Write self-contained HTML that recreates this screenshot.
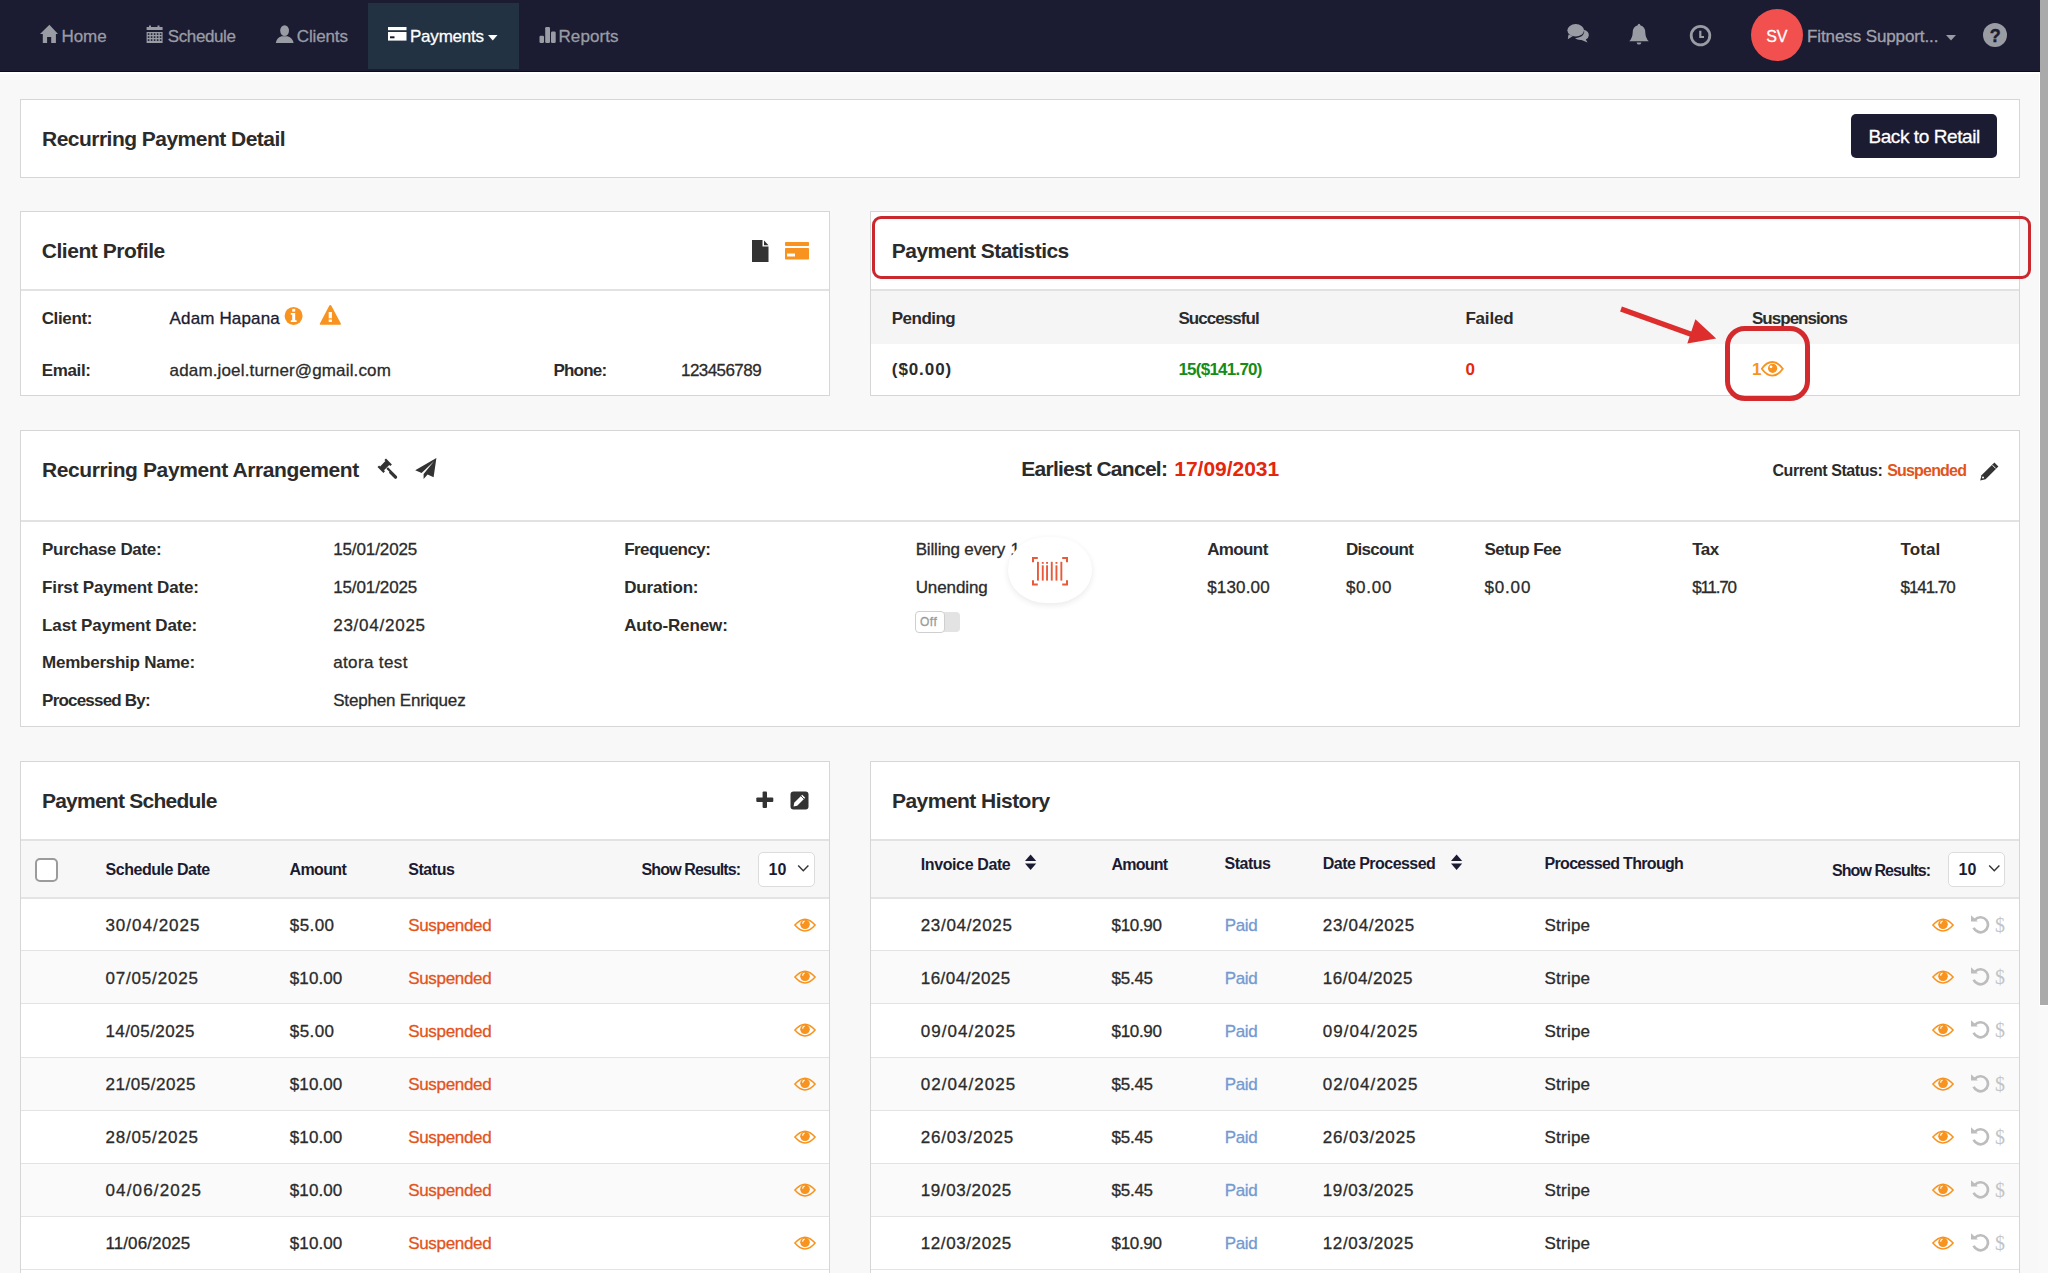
<!DOCTYPE html><html><head><meta charset="utf-8"><style>
html,body{margin:0;padding:0;}
body{width:2048px;height:1273px;overflow:hidden;background:#f8f8f8;position:relative;font-family:"Liberation Sans",sans-serif;}
.t{position:absolute;white-space:nowrap;}
.r{-webkit-text-stroke:0.3px currentColor;}
svg{display:block}
</style></head><body>
<div style="position:absolute;left:2039px;top:0px;width:9px;height:1273px;background:#f9f9f9;"></div>
<div style="position:absolute;left:2039px;top:0px;width:1px;height:1006px;background:#ffffff;"></div>
<div style="position:absolute;left:2040px;top:1005px;width:8px;height:1px;background:#ffffff;"></div>
<div style="position:absolute;left:2040px;top:0px;width:8px;height:1005px;background:#aaaaaa;"></div>
<div style="position:absolute;left:0px;top:0px;width:2040px;height:72px;background:#1b1b32;"></div>
<div style="position:absolute;left:0px;top:71px;width:2040px;height:1px;background:#0c0b1c;"></div>
<div style="position:absolute;left:0px;top:72px;width:2039px;height:2px;background:#ffffff;"></div>
<div style="position:absolute;left:368px;top:3px;width:151px;height:66px;background:#233242;"></div>
<svg style="position:absolute;left:40px;top:24px" width="18" height="19" viewBox="0 0 18 19"><path d="M9.4 0.8 L18 10 L15.9 10 L15.9 18.9 L11.2 18.9 L11.2 13.1 L7.1 13.1 L7.1 18.9 L2.8 18.9 L2.8 10 L0 10 Z" fill="#9a9ca4"/></svg>
<div class="t r" style="left:61.40px;top:27.6px;font-size:17px;line-height:17px;color:#9a9ca4;">Home</div>
<svg style="position:absolute;left:146px;top:25px" width="17" height="18" viewBox="0 0 17 18"><rect x="0.6" y="2" width="16" height="3" fill="#9a9ca4"/><rect x="3" y="0.5" width="2" height="3" fill="#9a9ca4"/><rect x="11.5" y="0.5" width="2" height="3" fill="#9a9ca4"/><rect x="0.6" y="7" width="16" height="11" fill="#9a9ca4"/><rect x="1.8" y="8.3" width="1.6" height="1.6" fill="#1b1b32"/><rect x="4.8" y="8.3" width="1.6" height="1.6" fill="#1b1b32"/><rect x="7.8" y="8.3" width="1.6" height="1.6" fill="#1b1b32"/><rect x="10.8" y="8.3" width="1.6" height="1.6" fill="#1b1b32"/><rect x="13.8" y="8.3" width="1.6" height="1.6" fill="#1b1b32"/><rect x="1.8" y="11.3" width="1.6" height="1.6" fill="#1b1b32"/><rect x="4.8" y="11.3" width="1.6" height="1.6" fill="#1b1b32"/><rect x="7.8" y="11.3" width="1.6" height="1.6" fill="#1b1b32"/><rect x="10.8" y="11.3" width="1.6" height="1.6" fill="#1b1b32"/><rect x="13.8" y="11.3" width="1.6" height="1.6" fill="#1b1b32"/><rect x="1.8" y="14.3" width="1.6" height="1.6" fill="#1b1b32"/><rect x="4.8" y="14.3" width="1.6" height="1.6" fill="#1b1b32"/><rect x="7.8" y="14.3" width="1.6" height="1.6" fill="#1b1b32"/><rect x="10.8" y="14.3" width="1.6" height="1.6" fill="#1b1b32"/><rect x="13.8" y="14.3" width="1.6" height="1.6" fill="#1b1b32"/></svg>
<div class="t r" style="left:167.80px;top:27.6px;font-size:17px;line-height:17px;color:#9a9ca4;letter-spacing:-0.400px;">Schedule</div>
<svg style="position:absolute;left:275px;top:25px" width="19" height="19" viewBox="0 0 19 19"><ellipse cx="9.6" cy="5.6" rx="4.4" ry="5.4" fill="#9a9ca4"/><path d="M0.8 18 Q1.5 13 6.5 11.2 L12.5 11.2 Q17.8 13 18.6 18 Z" fill="#9a9ca4"/></svg>
<div class="t r" style="left:296.80px;top:27.6px;font-size:17px;line-height:17px;color:#9a9ca4;letter-spacing:-0.133px;">Clients</div>
<svg style="position:absolute;left:388px;top:27px" width="19" height="14" viewBox="0 0 19 14"><rect x="0" y="0" width="18.5" height="3.2" fill="#fff"/><rect x="0" y="5" width="18.5" height="8.6" fill="#fff"/><rect x="2" y="9.3" width="4.5" height="2" fill="#1b1b32"/></svg>
<div class="t r" style="left:410.00px;top:27.6px;font-size:17px;line-height:17px;color:#ffffff;letter-spacing:-0.214px;">Payments</div>
<svg style="position:absolute;left:488px;top:35px" width="10" height="6" viewBox="0 0 10 6"><path d="M0 0 L9.5 0 L4.75 5.5 Z" fill="#fff"/></svg>
<svg style="position:absolute;left:539px;top:26px" width="17" height="17" viewBox="0 0 17 17"><rect x="0.5" y="9.8" width="4.5" height="7.2" rx="1.2" fill="#9a9ca4"/><rect x="6.2" y="1" width="4.8" height="16" rx="1.2" fill="#9a9ca4"/><rect x="12" y="5.6" width="4.7" height="11.4" rx="1.2" fill="#9a9ca4"/></svg>
<div class="t r" style="left:558.50px;top:27.6px;font-size:17px;line-height:17px;color:#9a9ca4;letter-spacing:0.083px;">Reports</div>
<svg style="position:absolute;left:1566px;top:24px" width="24" height="19" viewBox="0 0 24 19"><ellipse cx="9.7" cy="6.3" rx="8.3" ry="6.2" fill="#9a9ca4"/><path d="M2.5 10.5 L1.8 15.2 L7 12 Z" fill="#9a9ca4"/><path d="M18 5.8 Q23.2 7.5 22.8 11.6 Q22.5 14.6 19.8 15.6 L21.5 18.5 L15.5 16 Q11.2 16.2 9 14.2 Q16.8 13.6 18.2 8.5 Z" fill="#9a9ca4"/></svg>
<svg style="position:absolute;left:1628px;top:23px" width="22" height="23" viewBox="0 0 22 23"><path d="M11 0.8 Q12.2 0.8 12.3 2.3 Q17.2 3.5 17.3 9.5 Q17.4 15 20.8 18.3 L1.2 18.3 Q4.6 15 4.7 9.5 Q4.8 3.5 9.7 2.3 Q9.8 0.8 11 0.8 Z" fill="#9a9ca4"/><path d="M8.6 19.4 Q9 21.6 11 21.6 Q13 21.6 13.4 19.4 Z" fill="#9a9ca4"/></svg>
<svg style="position:absolute;left:1689px;top:24px" width="23" height="23" viewBox="0 0 23 23"><circle cx="11.5" cy="11.6" r="9.3" fill="none" stroke="#9a9ca4" stroke-width="2.8"/><path d="M11.3 6.8 L11.3 13 L15 13" fill="none" stroke="#9a9ca4" stroke-width="2.2"/></svg>
<div style="position:absolute;left:1751px;top:9px;width:52px;height:52px;background:#f24f4f;border-radius:50%;"></div>
<div class="t r" style="left:1766.20px;top:28.6px;font-size:16px;line-height:16px;color:#ffffff;">SV</div>
<div class="t r" style="left:1807.00px;top:27.6px;font-size:17px;line-height:17px;color:#a0a2ab;letter-spacing:-0.106px;">Fitness Support...</div>
<svg style="position:absolute;left:1946px;top:35px" width="11" height="6" viewBox="0 0 11 6"><path d="M0 0 L10 0 L5 5.5 Z" fill="#9a9ca4"/></svg>
<svg style="position:absolute;left:1983px;top:23px" width="24" height="24" viewBox="0 0 24 24"><circle cx="12" cy="12" r="12" fill="#9a9ca4"/></svg>
<div class="t" style="left:1989.80px;top:26.5px;font-size:18px;line-height:18px;color:#1b1b32;font-weight:bold;-webkit-text-stroke:0.4px #1b1b32;">?</div>
<div style="position:absolute;left:20px;top:99px;width:2000px;height:79px;box-sizing:border-box;background:#fff;border:1px solid #d6d6d6;"></div>
<div class="t" style="left:42.00px;top:127.9px;font-size:21px;line-height:21px;color:#2b2b2b;font-weight:bold;letter-spacing:-0.522px;">Recurring Payment Detail</div>
<div style="position:absolute;left:1851px;top:114px;width:146px;height:44px;background:#1b1b32;border-radius:5px;"></div>
<div class="t r" style="left:1868.40px;top:126.69999999999999px;font-size:19px;line-height:19px;color:#ffffff;letter-spacing:-0.415px;">Back to Retail</div>
<div style="position:absolute;left:20px;top:211px;width:810px;height:185px;box-sizing:border-box;background:#fff;border:1px solid #d6d6d6;"></div>
<div style="position:absolute;left:21px;top:289px;width:808px;height:2px;background:#e2e2e2;"></div>
<div class="t" style="left:41.70px;top:240.39999999999998px;font-size:21px;line-height:21px;color:#2b2b2b;font-weight:bold;letter-spacing:-0.454px;">Client Profile</div>
<svg style="position:absolute;left:752px;top:240px" width="17" height="22" viewBox="0 0 17 22"><path d="M0 0 L10.5 0 L10.5 6.5 L16.5 6.5 L16.5 22 L0 22 Z" fill="#333"/><path d="M12 0.5 L16.5 5.2 L12 5.2 Z" fill="#333"/></svg>
<svg style="position:absolute;left:785px;top:242px" width="24" height="18" viewBox="0 0 24 18"><rect x="0" y="0" width="24" height="4" rx="0.8" fill="#f7931e"/><rect x="0" y="6" width="24" height="11.6" rx="0.8" fill="#f7931e"/><rect x="2" y="11.5" width="8" height="3" fill="#fff"/></svg>
<div class="t" style="left:41.70px;top:309.9px;font-size:17px;line-height:17px;color:#2b2b2b;font-weight:bold;letter-spacing:-0.367px;">Client:</div>
<div class="t r" style="left:169.60px;top:309.9px;font-size:17px;line-height:17px;color:#1b1b32;letter-spacing:0.140px;">Adam Hapana</div>
<svg style="position:absolute;left:284px;top:306px" width="20" height="20" viewBox="0 0 20 20"><circle cx="9.6" cy="9.9" r="9" fill="#f7931e"/><rect x="8.2" y="2.9" width="3" height="2.7" fill="#fff"/><path d="M6.8 7 L11.2 7 L11.2 14.2 L12.6 14.2 L12.6 16 L6.8 16 L6.8 14.2 L8.2 14.2 L8.2 8.8 L6.8 8.8 Z" fill="#fff"/></svg>
<svg style="position:absolute;left:319px;top:304px" width="23" height="22" viewBox="0 0 23 22"><path d="M11.3 1 Q12 1 12.5 1.9 L21.8 19.5 Q22.2 20.8 21 20.8 L1.6 20.8 Q0.4 20.8 0.9 19.5 L10.1 1.9 Q10.6 1 11.3 1 Z" fill="#f7931e"/><rect x="9.7" y="8" width="3.2" height="6.3" fill="#fff"/><rect x="9.7" y="15.5" width="3.2" height="2.5" fill="#fff"/></svg>
<div class="t" style="left:41.70px;top:361.5px;font-size:17px;line-height:17px;color:#2b2b2b;font-weight:bold;letter-spacing:-0.340px;">Email:</div>
<div class="t r" style="left:169.60px;top:361.5px;font-size:17px;line-height:17px;color:#2b2b2b;letter-spacing:0.148px;">adam.joel.turner@gmail.com</div>
<div class="t" style="left:553.50px;top:361.5px;font-size:17px;line-height:17px;color:#2b2b2b;font-weight:bold;letter-spacing:-0.800px;">Phone:</div>
<div class="t r" style="left:681.00px;top:361.5px;font-size:17px;line-height:17px;color:#2b2b2b;letter-spacing:-0.562px;">123456789</div>
<div style="position:absolute;left:870px;top:211px;width:1150px;height:185px;box-sizing:border-box;background:#fff;border:1px solid #d6d6d6;"></div>
<div style="position:absolute;left:871px;top:289px;width:1148px;height:2px;background:#e2e2e2;"></div>
<div style="position:absolute;left:871px;top:291px;width:1148px;height:53px;background:#f5f5f5;"></div>
<div class="t" style="left:891.80px;top:240.3px;font-size:21px;line-height:21px;color:#2b2b2b;font-weight:bold;letter-spacing:-0.547px;">Payment Statistics</div>
<div class="t" style="left:891.80px;top:309.8px;font-size:17px;line-height:17px;color:#2b2b2b;font-weight:bold;letter-spacing:-0.533px;">Pending</div>
<div class="t" style="left:1178.40px;top:309.8px;font-size:17px;line-height:17px;color:#2b2b2b;font-weight:bold;letter-spacing:-0.933px;">Successful</div>
<div class="t" style="left:1465.40px;top:309.7px;font-size:17px;line-height:17px;color:#2b2b2b;font-weight:bold;letter-spacing:-0.180px;">Failed</div>
<div class="t" style="left:1752.00px;top:309.7px;font-size:17px;line-height:17px;color:#2b2b2b;font-weight:bold;letter-spacing:-0.980px;">Suspensions</div>
<div class="t" style="left:891.80px;top:361.4px;font-size:17px;line-height:17px;color:#2b2b2b;font-weight:bold;letter-spacing:0.917px;">($0.00)</div>
<div class="t" style="left:1178.40px;top:361.4px;font-size:17px;line-height:17px;color:#168c16;font-weight:bold;letter-spacing:-0.760px;">15($141.70)</div>
<div class="t" style="left:1465.40px;top:361.4px;font-size:17px;line-height:17px;color:#e3290e;font-weight:bold;">0</div>
<div class="t" style="left:1752.00px;top:361.4px;font-size:17px;line-height:17px;color:#f7931e;font-weight:bold;">1</div>
<svg style="position:absolute;left:1761px;top:361px" width="23" height="16" viewBox="0 0 23 16"><path d="M0.8 7.8 Q5.5 1 11.3 1 Q17.1 1 21.8 7.8 Q17.1 14.6 11.3 14.6 Q5.5 14.6 0.8 7.8 Z" fill="none" stroke="#f7931e" stroke-width="1.8"/><circle cx="11.6" cy="7.3" r="4.6" fill="#f7931e"/><circle cx="10" cy="5.8" r="1.4" fill="#fff"/></svg>
<div style="position:absolute;left:871.5px;top:216px;width:1159px;height:63px;box-sizing:border-box;border:3px solid #c9292e;border-radius:9px;"></div>
<div style="position:absolute;left:1724.5px;top:325.5px;width:85px;height:75px;box-sizing:border-box;border:5px solid #d32a2e;border-radius:20px;"></div>
<svg style="position:absolute;left:1610px;top:300px" width="115" height="50" viewBox="0 0 115 50"><path d="M11 9 L86 36" stroke="#dd2d2d" stroke-width="5.5" stroke-linecap="butt"/><path d="M106.2 38.6 L85.4 19.2 L77.3 43.5 Z" fill="#dd2d2d"/></svg>
<div style="position:absolute;left:20px;top:430px;width:2000px;height:297px;box-sizing:border-box;background:#fff;border:1px solid #d6d6d6;"></div>
<div style="position:absolute;left:21px;top:520px;width:1998px;height:2px;background:#e2e2e2;"></div>
<div class="t" style="left:41.90px;top:458.7px;font-size:21px;line-height:21px;color:#2b2b2b;font-weight:bold;letter-spacing:-0.393px;">Recurring Payment Arrangement</div>
<svg style="position:absolute;left:376px;top:457px" width="23" height="23" viewBox="0 0 23 23"><path d="M10 1.5 L15.9 7.4 L14.3 9 L13.3 8 L8 13.3 L9 14.3 L7.4 15.9 L1.5 10 L3.1 8.4 L4.1 9.4 L9.4 4.1 L8.4 3.1 Z" fill="#333"/><path d="M10.6 11.5 L12 10.2 L21 19.2 Q21.6 20.5 20.5 21.6 Q19.6 22.2 18.6 21.5 L12.8 15.8 L13.6 15 L10.6 12 Z" fill="#333"/></svg>
<svg style="position:absolute;left:414px;top:457px" width="24" height="23" viewBox="0 0 24 23"><path d="M22.4 1 L1.2 13.2 L7.6 15.9 L20 4.2 L9.6 17 L9.6 22 L13.6 17.6 L19.6 20.3 Z" fill="#333"/></svg>
<div class="t" style="left:1021.20px;top:457.9px;font-size:21px;line-height:21px;color:#2b2b2b;font-weight:bold;letter-spacing:-0.720px;">Earliest Cancel:</div>
<div class="t" style="left:1174.30px;top:457.9px;font-size:21px;line-height:21px;color:#e4260c;letter-spacing:-0.033px;font-weight:600;">17/09/2031</div>
<div class="t" style="left:1772.50px;top:462.6px;font-size:16px;line-height:16px;color:#2b2b2b;font-weight:bold;letter-spacing:-0.443px;">Current Status:</div>
<div class="t" style="left:1887.20px;top:462.6px;font-size:16px;line-height:16px;color:#e2541b;font-weight:bold;letter-spacing:-0.812px;">Suspended</div>
<svg style="position:absolute;left:1979px;top:462px" width="20" height="19" viewBox="0 0 20 19"><path d="M15.4 0.6 L19.4 4.6 L6.6 17.3 L1.2 18.6 L2.5 13.2 Z" fill="#333"/><path d="M13.5 3.2 L16.8 6.5" stroke="#fff" stroke-width="1"/><circle cx="4" cy="15.6" r="1" fill="#fff"/></svg>
<div class="t" style="left:42.10px;top:541.3px;font-size:17px;line-height:17px;color:#2b2b2b;font-weight:bold;letter-spacing:-0.331px;">Purchase Date:</div>
<div class="t r" style="left:333.20px;top:541.3px;font-size:17px;line-height:17px;color:#2b2b2b;letter-spacing:-0.111px;">15/01/2025</div>
<div class="t" style="left:42.10px;top:579.3px;font-size:17px;line-height:17px;color:#2b2b2b;font-weight:bold;letter-spacing:-0.156px;">First Payment Date:</div>
<div class="t r" style="left:333.20px;top:579.3px;font-size:17px;line-height:17px;color:#2b2b2b;letter-spacing:-0.111px;">15/01/2025</div>
<div class="t" style="left:42.10px;top:616.8px;font-size:17px;line-height:17px;color:#2b2b2b;font-weight:bold;letter-spacing:-0.153px;">Last Payment Date:</div>
<div class="t r" style="left:333.20px;top:616.8px;font-size:17px;line-height:17px;color:#2b2b2b;letter-spacing:0.756px;">23/04/2025</div>
<div class="t" style="left:42.10px;top:654.4px;font-size:17px;line-height:17px;color:#2b2b2b;font-weight:bold;letter-spacing:-0.253px;">Membership Name:</div>
<div class="t r" style="left:333.20px;top:654.4px;font-size:17px;line-height:17px;color:#2b2b2b;letter-spacing:0.367px;">atora test</div>
<div class="t" style="left:42.10px;top:692.2px;font-size:17px;line-height:17px;color:#2b2b2b;font-weight:bold;letter-spacing:-0.800px;">Processed By:</div>
<div class="t r" style="left:333.20px;top:692.2px;font-size:17px;line-height:17px;color:#2b2b2b;letter-spacing:-0.180px;">Stephen Enriquez</div>
<div class="t" style="left:624.20px;top:541px;font-size:17px;line-height:17px;color:#2b2b2b;font-weight:bold;letter-spacing:-0.544px;">Frequency:</div>
<div class="t" style="left:624.20px;top:579px;font-size:17px;line-height:17px;color:#2b2b2b;font-weight:bold;letter-spacing:-0.150px;">Duration:</div>
<div class="t" style="left:624.20px;top:616.8px;font-size:17px;line-height:17px;color:#2b2b2b;font-weight:bold;letter-spacing:-0.120px;">Auto-Renew:</div>
<div class="t r" style="left:915.70px;top:541px;font-size:17px;line-height:17px;color:#2b2b2b;letter-spacing:-0.175px;">Billing every</div>
<div class="t r" style="left:1010.50px;top:541px;font-size:17px;line-height:17px;color:#2b2b2b;">1</div>
<div class="t r" style="left:915.70px;top:579px;font-size:17px;line-height:17px;color:#2b2b2b;letter-spacing:-0.100px;">Unending</div>
<div style="position:absolute;left:944px;top:612px;width:16px;height:20px;background:#e3e3e3;border-radius:0 4px 4px 0;"></div>
<div style="position:absolute;left:915px;top:611px;width:30px;height:22px;box-sizing:border-box;background:#fff;border:1px solid #cfcfcf;border-radius:4px;"></div>
<div class="t r" style="left:920.00px;top:616px;font-size:12px;line-height:12px;color:#9a9a9a;letter-spacing:0.500px;">Off</div>
<div style="position:absolute;left:1008px;top:537px;width:84px;height:66px;background:#fff;border-radius:45%/50%;box-shadow:0 2px 6px rgba(0,0,0,0.09);"></div>
<svg style="position:absolute;left:1032px;top:557px" width="36" height="29" viewBox="0 0 36 29"><path d="M1 5.2 L1 1 L5.8 1 M30.2 1 L35 1 L35 5.2 M35 23.3 L35 27.5 L30.2 27.5 M5.8 27.5 L1 27.5 L1 23.3" fill="none" stroke="#e85a3a" stroke-width="2"/><rect x="5.0" y="4.8" width="1.9" height="18.8" fill="#e85a3a"/><rect x="9.8" y="5" width="1.9" height="1.8" fill="#e85a3a"/><rect x="9.8" y="8.3" width="1.9" height="15.3" fill="#e85a3a"/><rect x="14.1" y="5" width="1.9" height="1.8" fill="#e85a3a"/><rect x="14.1" y="8.3" width="1.9" height="15.3" fill="#e85a3a"/><rect x="18.8" y="4.8" width="1.9" height="18.8" fill="#e85a3a"/><rect x="23.5" y="5" width="1.9" height="1.8" fill="#e85a3a"/><rect x="23.5" y="8.3" width="1.9" height="15.3" fill="#e85a3a"/><rect x="28.4" y="4.8" width="1.9" height="18.8" fill="#e85a3a"/></svg>
<div class="t" style="left:1207.20px;top:541px;font-size:17px;line-height:17px;color:#2b2b2b;font-weight:bold;letter-spacing:-0.620px;">Amount</div>
<div class="t" style="left:1345.90px;top:541px;font-size:17px;line-height:17px;color:#2b2b2b;font-weight:bold;letter-spacing:-0.671px;">Discount</div>
<div class="t" style="left:1484.50px;top:541px;font-size:17px;line-height:17px;color:#2b2b2b;font-weight:bold;letter-spacing:-0.550px;">Setup Fee</div>
<div class="t" style="left:1692.30px;top:541px;font-size:17px;line-height:17px;color:#2b2b2b;font-weight:bold;letter-spacing:-0.550px;">Tax</div>
<div class="t" style="left:1900.50px;top:541px;font-size:17px;line-height:17px;color:#2b2b2b;font-weight:bold;letter-spacing:0.075px;">Total</div>
<div class="t r" style="left:1207.20px;top:578.5px;font-size:17px;line-height:17px;color:#2b2b2b;letter-spacing:0.167px;">$130.00</div>
<div class="t r" style="left:1345.90px;top:578.5px;font-size:17px;line-height:17px;color:#2b2b2b;letter-spacing:0.775px;">$0.00</div>
<div class="t r" style="left:1484.50px;top:578.5px;font-size:17px;line-height:17px;color:#2b2b2b;letter-spacing:0.825px;">$0.00</div>
<div class="t r" style="left:1692.30px;top:578.5px;font-size:17px;line-height:17px;color:#2b2b2b;letter-spacing:-1.200px;">$11.70</div>
<div class="t r" style="left:1900.50px;top:578.5px;font-size:17px;line-height:17px;color:#2b2b2b;letter-spacing:-1.050px;">$141.70</div>
<div style="position:absolute;left:20px;top:761px;width:810px;height:540px;box-sizing:border-box;background:#fff;border:1px solid #d6d6d6;"></div>
<div style="position:absolute;left:21px;top:839px;width:808px;height:2px;background:#e2e2e2;"></div>
<div style="position:absolute;left:21px;top:841px;width:808px;height:57px;background:#f7f7f7;"></div>
<div class="t" style="left:41.90px;top:790.2px;font-size:21px;line-height:21px;color:#2b2b2b;font-weight:bold;letter-spacing:-0.753px;">Payment Schedule</div>
<svg style="position:absolute;left:756px;top:791px" width="18" height="18" viewBox="0 0 18 18"><rect x="6.6" y="0.5" width="4.4" height="16.5" rx="1" fill="#333"/><rect x="0.3" y="6.6" width="17" height="4.4" rx="1" fill="#333"/></svg>
<svg style="position:absolute;left:790px;top:791px" width="19" height="19" viewBox="0 0 19 19"><rect x="0.5" y="0.5" width="18" height="18" rx="3" fill="#333"/><path d="M12.2 3.8 L15.2 6.8 L7.2 14.8 L3.6 15.4 L4.2 11.8 Z" fill="#fff"/><path d="M11 5 L14 8" stroke="#333" stroke-width="0.9"/></svg>
<div style="position:absolute;left:35px;top:858px;width:23px;height:24px;box-sizing:border-box;border:2px solid #9b9b9b;border-radius:5px;background:#fff;"></div>
<div class="t" style="left:105.60px;top:862.2px;font-size:16px;line-height:16px;color:#1b1b32;font-weight:bold;letter-spacing:-0.467px;">Schedule Date</div>
<div class="t" style="left:289.50px;top:862.2px;font-size:16px;line-height:16px;color:#1b1b32;font-weight:bold;letter-spacing:-0.640px;">Amount</div>
<div class="t" style="left:408.20px;top:862.2px;font-size:16px;line-height:16px;color:#1b1b32;font-weight:bold;letter-spacing:-0.440px;">Status</div>
<div class="t" style="left:641.60px;top:862.2px;font-size:16px;line-height:16px;color:#1b1b32;font-weight:bold;letter-spacing:-0.892px;">Show Results:</div>
<div style="position:absolute;left:758px;top:852px;width:57px;height:35px;box-sizing:border-box;background:#fff;border:1px solid #dcdcdc;border-radius:5px;"></div>
<div class="t" style="left:768.50px;top:861.5px;font-size:16px;line-height:16px;color:#1b1b32;font-weight:bold;">10</div>
<svg style="position:absolute;left:797px;top:864px" width="13" height="9" viewBox="0 0 13 9"><path d="M1.2 1.5 L6.3 6.8 L11.4 1.5" fill="none" stroke="#333" stroke-width="1.4"/></svg>
<div style="position:absolute;left:21px;top:897px;width:808px;height:2px;background:#e4e4e4;"></div>
<div style="position:absolute;left:21px;top:899px;width:808px;height:51px;background:#ffffff;"></div>
<div style="position:absolute;left:21px;top:950px;width:808px;height:1px;background:#e3e3e3;"></div>
<div class="t r" style="left:105.40px;top:917.0px;font-size:17px;line-height:17px;color:#2b2b2b;letter-spacing:1.000px;">30/04/2025</div>
<div class="t r" style="left:289.80px;top:917.0px;font-size:17px;line-height:17px;color:#2b2b2b;letter-spacing:0.425px;">$5.00</div>
<div class="t r" style="left:408.20px;top:917.0px;font-size:17px;line-height:17px;color:#e2541b;letter-spacing:-0.312px;">Suspended</div>
<svg style="position:absolute;left:794px;top:917px" width="22" height="16" viewBox="0 0 22 16"><path d="M0.9 8.1 Q11 -3.6 21.1 8.1 Q11 20 0.9 8.1 Z" fill="none" stroke="#f7931e" stroke-width="1.5"/><circle cx="11" cy="7.3" r="4.8" fill="#f7931e"/><path d="M8.6 6.6 Q8.8 4.6 10.6 4.2" fill="none" stroke="#fff" stroke-width="1.3"/></svg>
<div style="position:absolute;left:21px;top:951px;width:808px;height:52px;background:#fafafa;"></div>
<div style="position:absolute;left:21px;top:1003px;width:808px;height:1px;background:#e3e3e3;"></div>
<div class="t r" style="left:105.40px;top:970.1px;font-size:17px;line-height:17px;color:#2b2b2b;letter-spacing:0.833px;">07/05/2025</div>
<div class="t r" style="left:289.80px;top:970.1px;font-size:17px;line-height:17px;color:#2b2b2b;letter-spacing:0.100px;">$10.00</div>
<div class="t r" style="left:408.20px;top:970.1px;font-size:17px;line-height:17px;color:#e2541b;letter-spacing:-0.312px;">Suspended</div>
<svg style="position:absolute;left:794px;top:969px" width="22" height="16" viewBox="0 0 22 16"><path d="M0.9 8.1 Q11 -3.6 21.1 8.1 Q11 20 0.9 8.1 Z" fill="none" stroke="#f7931e" stroke-width="1.5"/><circle cx="11" cy="7.3" r="4.8" fill="#f7931e"/><path d="M8.6 6.6 Q8.8 4.6 10.6 4.2" fill="none" stroke="#fff" stroke-width="1.3"/></svg>
<div style="position:absolute;left:21px;top:1004px;width:808px;height:53px;background:#ffffff;"></div>
<div style="position:absolute;left:21px;top:1057px;width:808px;height:1px;background:#e3e3e3;"></div>
<div class="t r" style="left:105.40px;top:1023.0999999999999px;font-size:17px;line-height:17px;color:#2b2b2b;letter-spacing:0.444px;">14/05/2025</div>
<div class="t r" style="left:289.80px;top:1023.0999999999999px;font-size:17px;line-height:17px;color:#2b2b2b;letter-spacing:0.425px;">$5.00</div>
<div class="t r" style="left:408.20px;top:1023.0999999999999px;font-size:17px;line-height:17px;color:#e2541b;letter-spacing:-0.312px;">Suspended</div>
<svg style="position:absolute;left:794px;top:1022px" width="22" height="16" viewBox="0 0 22 16"><path d="M0.9 8.1 Q11 -3.6 21.1 8.1 Q11 20 0.9 8.1 Z" fill="none" stroke="#f7931e" stroke-width="1.5"/><circle cx="11" cy="7.3" r="4.8" fill="#f7931e"/><path d="M8.6 6.6 Q8.8 4.6 10.6 4.2" fill="none" stroke="#fff" stroke-width="1.3"/></svg>
<div style="position:absolute;left:21px;top:1058px;width:808px;height:52px;background:#fafafa;"></div>
<div style="position:absolute;left:21px;top:1110px;width:808px;height:1px;background:#e3e3e3;"></div>
<div class="t r" style="left:105.40px;top:1076.2px;font-size:17px;line-height:17px;color:#2b2b2b;letter-spacing:0.556px;">21/05/2025</div>
<div class="t r" style="left:289.80px;top:1076.2px;font-size:17px;line-height:17px;color:#2b2b2b;letter-spacing:0.100px;">$10.00</div>
<div class="t r" style="left:408.20px;top:1076.2px;font-size:17px;line-height:17px;color:#e2541b;letter-spacing:-0.312px;">Suspended</div>
<svg style="position:absolute;left:794px;top:1076px" width="22" height="16" viewBox="0 0 22 16"><path d="M0.9 8.1 Q11 -3.6 21.1 8.1 Q11 20 0.9 8.1 Z" fill="none" stroke="#f7931e" stroke-width="1.5"/><circle cx="11" cy="7.3" r="4.8" fill="#f7931e"/><path d="M8.6 6.6 Q8.8 4.6 10.6 4.2" fill="none" stroke="#fff" stroke-width="1.3"/></svg>
<div style="position:absolute;left:21px;top:1111px;width:808px;height:52px;background:#ffffff;"></div>
<div style="position:absolute;left:21px;top:1163px;width:808px;height:1px;background:#e3e3e3;"></div>
<div class="t r" style="left:105.40px;top:1129.3px;font-size:17px;line-height:17px;color:#2b2b2b;letter-spacing:0.833px;">28/05/2025</div>
<div class="t r" style="left:289.80px;top:1129.3px;font-size:17px;line-height:17px;color:#2b2b2b;letter-spacing:0.100px;">$10.00</div>
<div class="t r" style="left:408.20px;top:1129.3px;font-size:17px;line-height:17px;color:#e2541b;letter-spacing:-0.312px;">Suspended</div>
<svg style="position:absolute;left:794px;top:1129px" width="22" height="16" viewBox="0 0 22 16"><path d="M0.9 8.1 Q11 -3.6 21.1 8.1 Q11 20 0.9 8.1 Z" fill="none" stroke="#f7931e" stroke-width="1.5"/><circle cx="11" cy="7.3" r="4.8" fill="#f7931e"/><path d="M8.6 6.6 Q8.8 4.6 10.6 4.2" fill="none" stroke="#fff" stroke-width="1.3"/></svg>
<div style="position:absolute;left:21px;top:1164px;width:808px;height:52px;background:#fafafa;"></div>
<div style="position:absolute;left:21px;top:1216px;width:808px;height:1px;background:#e3e3e3;"></div>
<div class="t r" style="left:105.40px;top:1182.3px;font-size:17px;line-height:17px;color:#2b2b2b;letter-spacing:1.167px;">04/06/2025</div>
<div class="t r" style="left:289.80px;top:1182.3px;font-size:17px;line-height:17px;color:#2b2b2b;letter-spacing:0.100px;">$10.00</div>
<div class="t r" style="left:408.20px;top:1182.3px;font-size:17px;line-height:17px;color:#e2541b;letter-spacing:-0.312px;">Suspended</div>
<svg style="position:absolute;left:794px;top:1182px" width="22" height="16" viewBox="0 0 22 16"><path d="M0.9 8.1 Q11 -3.6 21.1 8.1 Q11 20 0.9 8.1 Z" fill="none" stroke="#f7931e" stroke-width="1.5"/><circle cx="11" cy="7.3" r="4.8" fill="#f7931e"/><path d="M8.6 6.6 Q8.8 4.6 10.6 4.2" fill="none" stroke="#fff" stroke-width="1.3"/></svg>
<div style="position:absolute;left:21px;top:1217px;width:808px;height:52px;background:#ffffff;"></div>
<div style="position:absolute;left:21px;top:1269px;width:808px;height:1px;background:#e3e3e3;"></div>
<div class="t r" style="left:105.40px;top:1235.4px;font-size:17px;line-height:17px;color:#2b2b2b;letter-spacing:0.111px;">11/06/2025</div>
<div class="t r" style="left:289.80px;top:1235.4px;font-size:17px;line-height:17px;color:#2b2b2b;letter-spacing:0.100px;">$10.00</div>
<div class="t r" style="left:408.20px;top:1235.4px;font-size:17px;line-height:17px;color:#e2541b;letter-spacing:-0.312px;">Suspended</div>
<svg style="position:absolute;left:794px;top:1235px" width="22" height="16" viewBox="0 0 22 16"><path d="M0.9 8.1 Q11 -3.6 21.1 8.1 Q11 20 0.9 8.1 Z" fill="none" stroke="#f7931e" stroke-width="1.5"/><circle cx="11" cy="7.3" r="4.8" fill="#f7931e"/><path d="M8.6 6.6 Q8.8 4.6 10.6 4.2" fill="none" stroke="#fff" stroke-width="1.3"/></svg>
<div style="position:absolute;left:870px;top:761px;width:1150px;height:540px;box-sizing:border-box;background:#fff;border:1px solid #d6d6d6;"></div>
<div style="position:absolute;left:871px;top:839px;width:1148px;height:2px;background:#e2e2e2;"></div>
<div style="position:absolute;left:871px;top:841px;width:1148px;height:57px;background:#f7f7f7;"></div>
<div class="t" style="left:892.00px;top:790.1px;font-size:21px;line-height:21px;color:#2b2b2b;font-weight:bold;letter-spacing:-0.536px;">Payment History</div>
<div class="t" style="left:920.70px;top:856.6px;font-size:16px;line-height:16px;color:#1b1b32;font-weight:bold;letter-spacing:-0.382px;">Invoice Date</div>
<svg style="position:absolute;left:1024px;top:854px" width="14" height="17" viewBox="0 0 14 17"><path d="M1 7 L6.6 0.6 L12.2 7 Z" fill="#1b1b32"/><path d="M1 9.6 L12.2 9.6 L6.6 16 Z" fill="#1b1b32"/></svg>
<div class="t" style="left:1111.50px;top:856.6px;font-size:16px;line-height:16px;color:#1b1b32;font-weight:bold;letter-spacing:-0.760px;">Amount</div>
<div class="t" style="left:1224.60px;top:856.3px;font-size:16px;line-height:16px;color:#1b1b32;font-weight:bold;letter-spacing:-0.520px;">Status</div>
<div class="t" style="left:1322.80px;top:856.3px;font-size:16px;line-height:16px;color:#1b1b32;font-weight:bold;letter-spacing:-0.538px;">Date Processed</div>
<svg style="position:absolute;left:1449.5px;top:854px" width="14" height="17" viewBox="0 0 14 17"><path d="M1 7 L6.6 0.6 L12.2 7 Z" fill="#1b1b32"/><path d="M1 9.6 L12.2 9.6 L6.6 16 Z" fill="#1b1b32"/></svg>
<div class="t" style="left:1544.50px;top:856.3px;font-size:16px;line-height:16px;color:#1b1b32;font-weight:bold;letter-spacing:-0.681px;">Processed Through</div>
<div class="t" style="left:1832.00px;top:862.8px;font-size:16px;line-height:16px;color:#1b1b32;font-weight:bold;letter-spacing:-0.925px;">Show Results:</div>
<div style="position:absolute;left:1948px;top:852px;width:57px;height:35px;box-sizing:border-box;background:#fff;border:1px solid #dcdcdc;border-radius:5px;"></div>
<div class="t" style="left:1958.50px;top:861.5px;font-size:16px;line-height:16px;color:#1b1b32;font-weight:bold;">10</div>
<svg style="position:absolute;left:1988px;top:864px" width="13" height="9" viewBox="0 0 13 9"><path d="M1.2 1.5 L6.3 6.8 L11.4 1.5" fill="none" stroke="#333" stroke-width="1.4"/></svg>
<div style="position:absolute;left:871px;top:897px;width:1148px;height:2px;background:#e4e4e4;"></div>
<div style="position:absolute;left:871px;top:899px;width:1148px;height:51px;background:#ffffff;"></div>
<div style="position:absolute;left:871px;top:950px;width:1148px;height:1px;background:#e3e3e3;"></div>
<div class="t r" style="left:920.70px;top:916.7px;font-size:17px;line-height:17px;color:#2b2b2b;letter-spacing:0.689px;">23/04/2025</div>
<div class="t r" style="left:1111.50px;top:916.7px;font-size:17px;line-height:17px;color:#2b2b2b;letter-spacing:-0.320px;">$10.90</div>
<div class="t r" style="left:1224.80px;top:916.7px;font-size:17px;line-height:17px;color:#7499d1;letter-spacing:-0.400px;">Paid</div>
<div class="t r" style="left:1322.80px;top:916.7px;font-size:17px;line-height:17px;color:#2b2b2b;letter-spacing:0.689px;">23/04/2025</div>
<div class="t r" style="left:1544.50px;top:916.7px;font-size:17px;line-height:17px;color:#2b2b2b;letter-spacing:0.220px;">Stripe</div>
<svg style="position:absolute;left:1932px;top:917px" width="22" height="16" viewBox="0 0 22 16"><path d="M0.9 8.1 Q11 -3.6 21.1 8.1 Q11 20 0.9 8.1 Z" fill="none" stroke="#f7931e" stroke-width="1.5"/><circle cx="11" cy="7.3" r="4.8" fill="#f7931e"/><path d="M8.6 6.6 Q8.8 4.6 10.6 4.2" fill="none" stroke="#fff" stroke-width="1.3"/></svg>
<svg style="position:absolute;left:1970px;top:914px" width="21" height="20" viewBox="0 0 21 20"><path d="M5 5.6 A7.5 7.5 0 1 1 3.6 13.8" fill="none" stroke="#bdbdbd" stroke-width="2.7"/><path d="M1 1.2 L1 7.4 L7.9 7.4 Z" fill="#bdbdbd"/></svg>
<div class="t" style="left:1995px;top:915px;font-family:'Liberation Serif',serif;font-size:20px;line-height:20px;color:#c4c4c4;">$</div>
<div style="position:absolute;left:871px;top:951px;width:1148px;height:52px;background:#fafafa;"></div>
<div style="position:absolute;left:871px;top:1003px;width:1148px;height:1px;background:#e3e3e3;"></div>
<div class="t r" style="left:920.70px;top:969.8px;font-size:17px;line-height:17px;color:#2b2b2b;letter-spacing:0.500px;">16/04/2025</div>
<div class="t r" style="left:1111.50px;top:969.8px;font-size:17px;line-height:17px;color:#2b2b2b;letter-spacing:-0.250px;">$5.45</div>
<div class="t r" style="left:1224.80px;top:969.8px;font-size:17px;line-height:17px;color:#7499d1;letter-spacing:-0.400px;">Paid</div>
<div class="t r" style="left:1322.80px;top:969.8px;font-size:17px;line-height:17px;color:#2b2b2b;letter-spacing:0.500px;">16/04/2025</div>
<div class="t r" style="left:1544.50px;top:969.8px;font-size:17px;line-height:17px;color:#2b2b2b;letter-spacing:0.220px;">Stripe</div>
<svg style="position:absolute;left:1932px;top:969px" width="22" height="16" viewBox="0 0 22 16"><path d="M0.9 8.1 Q11 -3.6 21.1 8.1 Q11 20 0.9 8.1 Z" fill="none" stroke="#f7931e" stroke-width="1.5"/><circle cx="11" cy="7.3" r="4.8" fill="#f7931e"/><path d="M8.6 6.6 Q8.8 4.6 10.6 4.2" fill="none" stroke="#fff" stroke-width="1.3"/></svg>
<svg style="position:absolute;left:1970px;top:966px" width="21" height="20" viewBox="0 0 21 20"><path d="M5 5.6 A7.5 7.5 0 1 1 3.6 13.8" fill="none" stroke="#bdbdbd" stroke-width="2.7"/><path d="M1 1.2 L1 7.4 L7.9 7.4 Z" fill="#bdbdbd"/></svg>
<div class="t" style="left:1995px;top:967px;font-family:'Liberation Serif',serif;font-size:20px;line-height:20px;color:#c4c4c4;">$</div>
<div style="position:absolute;left:871px;top:1004px;width:1148px;height:53px;background:#ffffff;"></div>
<div style="position:absolute;left:871px;top:1057px;width:1148px;height:1px;background:#e3e3e3;"></div>
<div class="t r" style="left:920.70px;top:1022.8px;font-size:17px;line-height:17px;color:#2b2b2b;letter-spacing:1.056px;">09/04/2025</div>
<div class="t r" style="left:1111.50px;top:1022.8px;font-size:17px;line-height:17px;color:#2b2b2b;letter-spacing:-0.320px;">$10.90</div>
<div class="t r" style="left:1224.80px;top:1022.8px;font-size:17px;line-height:17px;color:#7499d1;letter-spacing:-0.400px;">Paid</div>
<div class="t r" style="left:1322.80px;top:1022.8px;font-size:17px;line-height:17px;color:#2b2b2b;letter-spacing:1.056px;">09/04/2025</div>
<div class="t r" style="left:1544.50px;top:1022.8px;font-size:17px;line-height:17px;color:#2b2b2b;letter-spacing:0.220px;">Stripe</div>
<svg style="position:absolute;left:1932px;top:1022px" width="22" height="16" viewBox="0 0 22 16"><path d="M0.9 8.1 Q11 -3.6 21.1 8.1 Q11 20 0.9 8.1 Z" fill="none" stroke="#f7931e" stroke-width="1.5"/><circle cx="11" cy="7.3" r="4.8" fill="#f7931e"/><path d="M8.6 6.6 Q8.8 4.6 10.6 4.2" fill="none" stroke="#fff" stroke-width="1.3"/></svg>
<svg style="position:absolute;left:1970px;top:1019px" width="21" height="20" viewBox="0 0 21 20"><path d="M5 5.6 A7.5 7.5 0 1 1 3.6 13.8" fill="none" stroke="#bdbdbd" stroke-width="2.7"/><path d="M1 1.2 L1 7.4 L7.9 7.4 Z" fill="#bdbdbd"/></svg>
<div class="t" style="left:1995px;top:1020px;font-family:'Liberation Serif',serif;font-size:20px;line-height:20px;color:#c4c4c4;">$</div>
<div style="position:absolute;left:871px;top:1058px;width:1148px;height:52px;background:#fafafa;"></div>
<div style="position:absolute;left:871px;top:1110px;width:1148px;height:1px;background:#e3e3e3;"></div>
<div class="t r" style="left:920.70px;top:1075.9px;font-size:17px;line-height:17px;color:#2b2b2b;letter-spacing:1.056px;">02/04/2025</div>
<div class="t r" style="left:1111.50px;top:1075.9px;font-size:17px;line-height:17px;color:#2b2b2b;letter-spacing:-0.250px;">$5.45</div>
<div class="t r" style="left:1224.80px;top:1075.9px;font-size:17px;line-height:17px;color:#7499d1;letter-spacing:-0.400px;">Paid</div>
<div class="t r" style="left:1322.80px;top:1075.9px;font-size:17px;line-height:17px;color:#2b2b2b;letter-spacing:1.056px;">02/04/2025</div>
<div class="t r" style="left:1544.50px;top:1075.9px;font-size:17px;line-height:17px;color:#2b2b2b;letter-spacing:0.220px;">Stripe</div>
<svg style="position:absolute;left:1932px;top:1076px" width="22" height="16" viewBox="0 0 22 16"><path d="M0.9 8.1 Q11 -3.6 21.1 8.1 Q11 20 0.9 8.1 Z" fill="none" stroke="#f7931e" stroke-width="1.5"/><circle cx="11" cy="7.3" r="4.8" fill="#f7931e"/><path d="M8.6 6.6 Q8.8 4.6 10.6 4.2" fill="none" stroke="#fff" stroke-width="1.3"/></svg>
<svg style="position:absolute;left:1970px;top:1073px" width="21" height="20" viewBox="0 0 21 20"><path d="M5 5.6 A7.5 7.5 0 1 1 3.6 13.8" fill="none" stroke="#bdbdbd" stroke-width="2.7"/><path d="M1 1.2 L1 7.4 L7.9 7.4 Z" fill="#bdbdbd"/></svg>
<div class="t" style="left:1995px;top:1074px;font-family:'Liberation Serif',serif;font-size:20px;line-height:20px;color:#c4c4c4;">$</div>
<div style="position:absolute;left:871px;top:1111px;width:1148px;height:52px;background:#ffffff;"></div>
<div style="position:absolute;left:871px;top:1163px;width:1148px;height:1px;background:#e3e3e3;"></div>
<div class="t r" style="left:920.70px;top:1129.0px;font-size:17px;line-height:17px;color:#2b2b2b;letter-spacing:0.833px;">26/03/2025</div>
<div class="t r" style="left:1111.50px;top:1129.0px;font-size:17px;line-height:17px;color:#2b2b2b;letter-spacing:-0.250px;">$5.45</div>
<div class="t r" style="left:1224.80px;top:1129.0px;font-size:17px;line-height:17px;color:#7499d1;letter-spacing:-0.400px;">Paid</div>
<div class="t r" style="left:1322.80px;top:1129.0px;font-size:17px;line-height:17px;color:#2b2b2b;letter-spacing:0.833px;">26/03/2025</div>
<div class="t r" style="left:1544.50px;top:1129.0px;font-size:17px;line-height:17px;color:#2b2b2b;letter-spacing:0.220px;">Stripe</div>
<svg style="position:absolute;left:1932px;top:1129px" width="22" height="16" viewBox="0 0 22 16"><path d="M0.9 8.1 Q11 -3.6 21.1 8.1 Q11 20 0.9 8.1 Z" fill="none" stroke="#f7931e" stroke-width="1.5"/><circle cx="11" cy="7.3" r="4.8" fill="#f7931e"/><path d="M8.6 6.6 Q8.8 4.6 10.6 4.2" fill="none" stroke="#fff" stroke-width="1.3"/></svg>
<svg style="position:absolute;left:1970px;top:1126px" width="21" height="20" viewBox="0 0 21 20"><path d="M5 5.6 A7.5 7.5 0 1 1 3.6 13.8" fill="none" stroke="#bdbdbd" stroke-width="2.7"/><path d="M1 1.2 L1 7.4 L7.9 7.4 Z" fill="#bdbdbd"/></svg>
<div class="t" style="left:1995px;top:1127px;font-family:'Liberation Serif',serif;font-size:20px;line-height:20px;color:#c4c4c4;">$</div>
<div style="position:absolute;left:871px;top:1164px;width:1148px;height:52px;background:#fafafa;"></div>
<div style="position:absolute;left:871px;top:1216px;width:1148px;height:1px;background:#e3e3e3;"></div>
<div class="t r" style="left:920.70px;top:1182.1px;font-size:17px;line-height:17px;color:#2b2b2b;letter-spacing:0.611px;">19/03/2025</div>
<div class="t r" style="left:1111.50px;top:1182.1px;font-size:17px;line-height:17px;color:#2b2b2b;letter-spacing:-0.250px;">$5.45</div>
<div class="t r" style="left:1224.80px;top:1182.1px;font-size:17px;line-height:17px;color:#7499d1;letter-spacing:-0.400px;">Paid</div>
<div class="t r" style="left:1322.80px;top:1182.1px;font-size:17px;line-height:17px;color:#2b2b2b;letter-spacing:0.611px;">19/03/2025</div>
<div class="t r" style="left:1544.50px;top:1182.1px;font-size:17px;line-height:17px;color:#2b2b2b;letter-spacing:0.220px;">Stripe</div>
<svg style="position:absolute;left:1932px;top:1182px" width="22" height="16" viewBox="0 0 22 16"><path d="M0.9 8.1 Q11 -3.6 21.1 8.1 Q11 20 0.9 8.1 Z" fill="none" stroke="#f7931e" stroke-width="1.5"/><circle cx="11" cy="7.3" r="4.8" fill="#f7931e"/><path d="M8.6 6.6 Q8.8 4.6 10.6 4.2" fill="none" stroke="#fff" stroke-width="1.3"/></svg>
<svg style="position:absolute;left:1970px;top:1179px" width="21" height="20" viewBox="0 0 21 20"><path d="M5 5.6 A7.5 7.5 0 1 1 3.6 13.8" fill="none" stroke="#bdbdbd" stroke-width="2.7"/><path d="M1 1.2 L1 7.4 L7.9 7.4 Z" fill="#bdbdbd"/></svg>
<div class="t" style="left:1995px;top:1180px;font-family:'Liberation Serif',serif;font-size:20px;line-height:20px;color:#c4c4c4;">$</div>
<div style="position:absolute;left:871px;top:1217px;width:1148px;height:52px;background:#ffffff;"></div>
<div style="position:absolute;left:871px;top:1269px;width:1148px;height:1px;background:#e3e3e3;"></div>
<div class="t r" style="left:920.70px;top:1235.1px;font-size:17px;line-height:17px;color:#2b2b2b;letter-spacing:0.611px;">12/03/2025</div>
<div class="t r" style="left:1111.50px;top:1235.1px;font-size:17px;line-height:17px;color:#2b2b2b;letter-spacing:-0.320px;">$10.90</div>
<div class="t r" style="left:1224.80px;top:1235.1px;font-size:17px;line-height:17px;color:#7499d1;letter-spacing:-0.400px;">Paid</div>
<div class="t r" style="left:1322.80px;top:1235.1px;font-size:17px;line-height:17px;color:#2b2b2b;letter-spacing:0.611px;">12/03/2025</div>
<div class="t r" style="left:1544.50px;top:1235.1px;font-size:17px;line-height:17px;color:#2b2b2b;letter-spacing:0.220px;">Stripe</div>
<svg style="position:absolute;left:1932px;top:1235px" width="22" height="16" viewBox="0 0 22 16"><path d="M0.9 8.1 Q11 -3.6 21.1 8.1 Q11 20 0.9 8.1 Z" fill="none" stroke="#f7931e" stroke-width="1.5"/><circle cx="11" cy="7.3" r="4.8" fill="#f7931e"/><path d="M8.6 6.6 Q8.8 4.6 10.6 4.2" fill="none" stroke="#fff" stroke-width="1.3"/></svg>
<svg style="position:absolute;left:1970px;top:1232px" width="21" height="20" viewBox="0 0 21 20"><path d="M5 5.6 A7.5 7.5 0 1 1 3.6 13.8" fill="none" stroke="#bdbdbd" stroke-width="2.7"/><path d="M1 1.2 L1 7.4 L7.9 7.4 Z" fill="#bdbdbd"/></svg>
<div class="t" style="left:1995px;top:1233px;font-family:'Liberation Serif',serif;font-size:20px;line-height:20px;color:#c4c4c4;">$</div>
</body></html>
